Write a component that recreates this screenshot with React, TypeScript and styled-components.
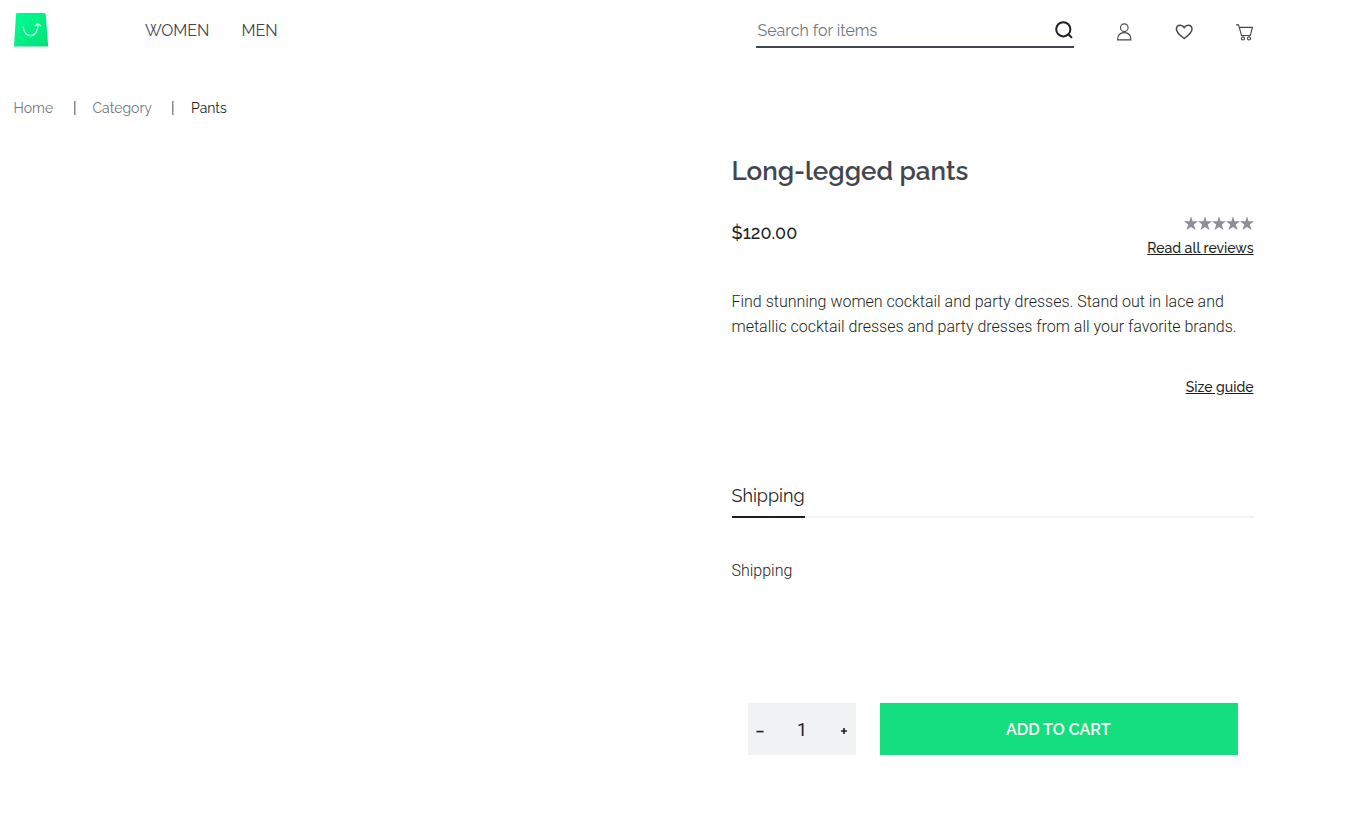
import React from "react";
import styled, { createGlobalStyle } from "styled-components";

const GlobalStyle = createGlobalStyle`
  * { box-sizing: border-box; }
  body { margin: 0; background: #fff; color: #1d1f22; -webkit-font-smoothing: antialiased; }
  button, input { font: inherit; border: 0; background: none; padding: 0; margin: 0; outline: 0; color: inherit; }
  p, h1 { margin: 0; }
`;

const display = `"Raleway", "Lato", sans-serif`;
const body = `"Roboto", sans-serif`;

const Page = styled.div`
  width: 1267px;
  height: 834px;
  padding: 0 13.5px;
  font-family: ${display};
`;
const Header = styled.header`
  display: flex;
  align-items: flex-start;
  height: 60px;
`;
const Logo = styled.svg`
  display: block;
  width: 35px;
  height: 35px;
  margin-top: 12px;
  flex: none;
`;
const Nav = styled.nav`
  display: flex;
  gap: 32px;
  margin-left: 96.5px;
  padding-top: 18px;
`;
const NavLink = styled.a<{ $width: number }>`
  width: ${(p) => p.$width}px;
  font-size: 16px;
  line-height: 25px;
  color: #43464e;
  white-space: nowrap;
`;
const Search = styled.label`
  display: flex;
  align-items: flex-start;
  width: 318px;
  height: 48px;
  margin-left: auto;
  padding: 18px 0 0 2px;
  border-bottom: 2px solid #43464e;
`;
const SearchInput = styled.input`
  flex: 1;
  min-width: 0;
  height: 25px;
  font-size: 16px;
  &::placeholder { color: #72757e; opacity: 1; }
`;
const SearchIcon = styled.svg`
  display: block;
  width: 20px;
  height: 20px;
  margin-top: 2px;
`;
const Actions = styled.div`
  display: flex;
  gap: 40px;
  margin: 22px 0 0 40px;
`;
const ActionIcon = styled.svg`
  display: block;
  width: 20px;
  height: 20px;
`;
const Crumbs = styled.nav`
  display: flex;
  height: 22px;
  margin-top: 37px;
  font-size: 14px;
  line-height: 22px;
`;
const Crumb = styled.a<{ $width: number; $current?: boolean }>`
  width: ${(p) => p.$width}px;
  white-space: nowrap;
  color: ${(p) => (p.$current ? "#1d1f22" : "#72757e")};
`;
const Divider = styled.span`
  width: 2px;
  height: 14px;
  margin: 4px 17px 0 20px;
  background: linear-gradient(90deg, #85878f 50%, #c3c4c9 50%);
`;
const Product = styled.main`
  width: 522px;
  margin: 35px 0 0 auto;
`;
const Title = styled.h1`
  font-size: 26px;
  line-height: 34px;
  font-weight: 600;
  color: #43464e;
`;
const PriceRow = styled.div`
  display: flex;
  justify-content: space-between;
  margin-top: 28px;
  height: 43px;
`;
const Price = styled.span`
  padding-top: 5px;
  font-size: 18px;
  line-height: 24px;
  font-weight: 500;
`;
const Rating = styled.div`
  display: flex;
  flex-direction: column;
  align-items: flex-end;
`;
const Stars = styled.div`
  display: flex;
  svg { display: block; width: 14px; height: 14px; fill: #8d8f9a; overflow: visible; }
`;
const TextLink = styled.a`
  font-size: 14px;
  line-height: 22px;
  font-weight: 500;
  text-decoration: underline;
  white-space: nowrap;
`;
const ReviewLink = styled(TextLink)`
  margin-top: 7px;
`;
const Copy = styled.p`
  font-family: ${body};
  font-size: 16px;
  line-height: 25.6px;
  font-weight: 300;
  letter-spacing: -0.008px;
`;
const Description = styled(Copy)`
  margin-top: 30px;
  line-height: 25px;
`;
const GuideRow = styled.div`
  display: flex;
  justify-content: flex-end;
  margin-top: 37px;
`;
const Tabs = styled.div`
  display: flex;
  height: 41px;
  margin-top: 79px;
  border-bottom: 2px solid #f1f2f3;
`;
const Tab = styled.button`
  height: 41px;
  width: 73px;
  padding-bottom: 2px;
  border-bottom: 2px solid #1d1f22;
  font-size: 18px;
  text-align: left;
  white-space: nowrap;
`;
const TabPanel = styled.div`
  padding-top: 40px;
`;
const BuyRow = styled.div`
  display: flex;
  gap: 24px;
  margin: 119.4px 16px 0 16.5px;
`;
const Quantity = styled.div`
  display: flex;
  justify-content: space-between;
  align-items: center;
  width: 108px;
  height: 52px;
  padding: 2px 8px 0;
  background: #f1f2f4;
`;
const Step = styled.button`
  display: flex;
  margin-top: 2px;
  svg { display: block; width: 8px; height: 8px; }
`;
const Amount = styled.span`
  font-family: ${body};
  font-size: 18px;
  line-height: 24px;
`;
const AddButton = styled.button`
  flex: 1;
  height: 52px;
  padding: 2px 1px 0 0;
  background: #14de7e;
  color: #fff;
  font-size: 16px;
  font-weight: 600;
`;

export default function App() {
  return (
    <>
      <GlobalStyle />
      <Page>
        <Header>
          <Logo viewBox="0 0 35 35">
            <defs>
              <linearGradient id="bag" x1="0" y1="0" x2="1" y2="1">
                <stop offset="0" stopColor="#00ff94" />
                <stop offset="1" stopColor="#00df76" />
              </linearGradient>
            </defs>
            <path d="M3.2 1h27.1q1.3 0 1.4 1.3L34.2 34.5H0L2 2.3Q2 1 3.2 1z" fill="url(#bag)" />
            <path d="M9.2 14.5c.2 5.2 3.2 9.2 7.3 9.2 4.5 0 7.8-4.8 7.4-12.2M20.9 14l3-2.7 2.9 2.7" fill="none" stroke="#d5ffe9" strokeWidth="1.25" />
          </Logo>
          <Nav>
            <NavLink $width={64.5}>WOMEN</NavLink>
            <NavLink $width={37}>MEN</NavLink>
          </Nav>
          <Search>
            <SearchInput placeholder="Search for items" />
            <SearchIcon viewBox="0 0 20 20" fill="none" stroke="#1d1f22" strokeWidth="2">
              <circle cx="9.3" cy="9.3" r="7.1" />
              <path d="m14.3 14.3 3.7 3.6" />
            </SearchIcon>
          </Search>
          <Actions>
            <ActionIcon viewBox="0 0 20 20" fill="none" stroke="#43464e" strokeWidth="1.1">
              <circle cx="10.3" cy="5.7" r="3.8" />
              <path d="M3.6 17.9c0-4.5 2.6-7.3 6.7-7.3s6.7 2.8 6.7 7.3z" />
            </ActionIcon>
            <ActionIcon viewBox="0 0 20 20" fill="none" stroke="#43464e" strokeWidth="1.5">
              <path d="M10.2 16.5C6.4 13.7 2.4 10.7 2.4 7.2c0-2.3 1.7-4 3.9-4 1.8 0 3 .9 3.9 2.3.9-1.4 2.1-2.3 3.9-2.3 2.2 0 3.9 1.7 3.9 4 0 3.5-4 6.5-7.8 9.3z" />
            </ActionIcon>
            <ActionIcon viewBox="0 0 20 20" fill="none" stroke="#43464e" strokeWidth="1.1">
              <path d="M2 2.9h2.5l.8 2.5 2.2 8.1h8.8l2.2-8.1H5.3" />
              <circle cx="9" cy="16.4" r="1.5" />
              <circle cx="15" cy="16.4" r="1.5" />
            </ActionIcon>
          </Actions>
        </Header>
        <Crumbs>
          <Crumb $width={40}>Home</Crumb>
          <Divider />
          <Crumb $width={59.5}>Category</Crumb>
          <Divider />
          <Crumb $width={37} $current>Pants</Crumb>
        </Crumbs>
        <Product>
          <Title>Long-legged pants</Title>
          <PriceRow>
            <Price>$120.00</Price>
            <Rating>
              <Stars>
                {[0, 1, 2, 3, 4].map((n) => (
                  <svg key={n} viewBox="0 0 14 14">
                    <path d="M7 .2 8.6 5.3H14L9.8 8.6l1.7 5.5L7 10.9l-4.5 3.2 1.7-5.5L0 5.3h5.4z" />
                  </svg>
                ))}
              </Stars>
              <ReviewLink>Read all reviews</ReviewLink>
            </Rating>
          </PriceRow>
          <Description>
            Find stunning women cocktail and party dresses. Stand out in lace and metallic cocktail dresses and party dresses from all your favorite brands.
          </Description>
          <GuideRow>
            <TextLink>Size guide</TextLink>
          </GuideRow>
          <Tabs>
            <Tab>Shipping</Tab>
          </Tabs>
          <TabPanel>
            <Copy>Shipping</Copy>
          </TabPanel>
          <BuyRow>
            <Quantity>
              <Step aria-label="Decrease">
                <svg viewBox="0 0 8 8"><path d="M.5 3.8h7v1.6h-7z" fill="#1d1f22" /></svg>
              </Step>
              <Amount>1</Amount>
              <Step aria-label="Increase">
                <svg viewBox="0 0 8 8"><path d="M1 4h6M4 1v6" stroke="#1d1f22" strokeWidth="1.6" /></svg>
              </Step>
            </Quantity>
            <AddButton>ADD TO CART</AddButton>
          </BuyRow>
        </Product>
      </Page>
    </>
  );
}
